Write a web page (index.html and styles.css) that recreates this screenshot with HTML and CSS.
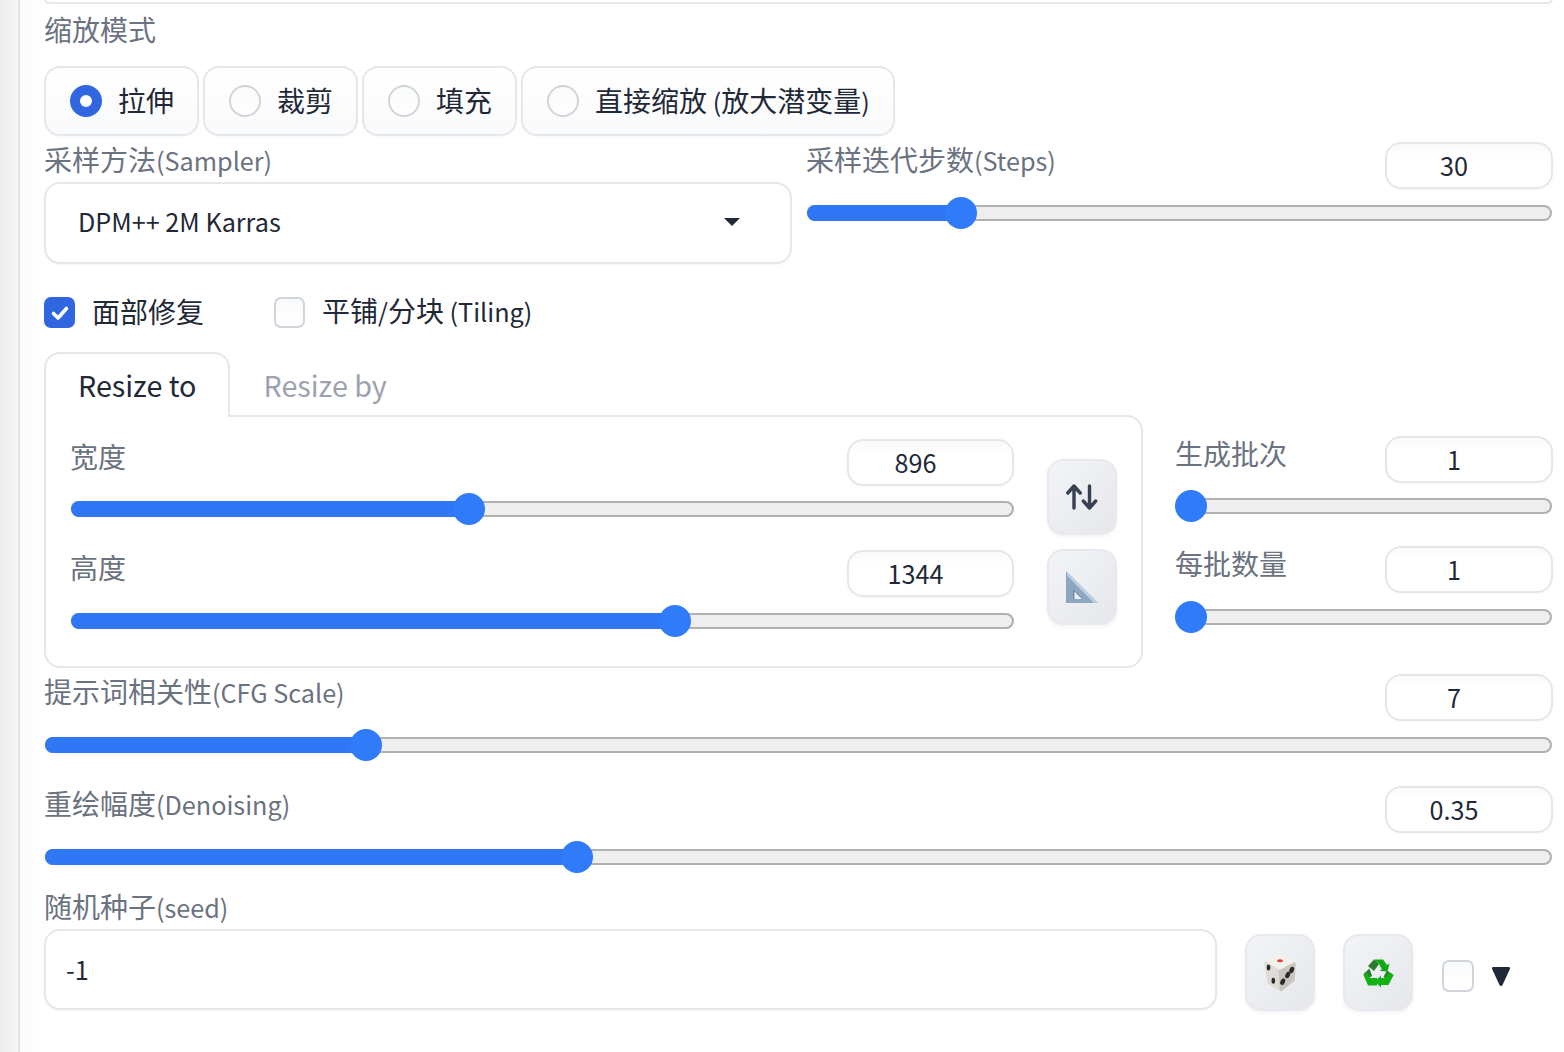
FILE: index.html
```html
<!DOCTYPE html>
<html lang="zh-CN">
<head>
<meta charset="utf-8">
<title>Settings</title>
<link rel="stylesheet" href="styles.css">
</head>
<body>
<div class="page">
  <div class="rail"></div>
  <main class="main">
    <div class="top-edge"></div>

    <section class="mode">
      <div class="label">缩放模式</div>
      <div class="radios">
        <label class="radio-item"><span class="radio checked"></span><span class="opt">拉伸</span></label>
        <label class="radio-item"><span class="radio"></span><span class="opt">裁剪</span></label>
        <label class="radio-item"><span class="radio"></span><span class="opt">填充</span></label>
        <label class="radio-item"><span class="radio"></span><span class="opt">直接缩放<span class="lat"> (</span>放大潜变量<span class="lat">)</span></span></label>
      </div>
    </section>

    <section class="sampler-row">
      <div class="sampler">
        <div class="label">采样方法<span class="lat">(Sampler)</span></div>
        <div class="select">
          <span class="lat">DPM++ 2M Karras</span>
          <svg class="caret" width="16" height="8" viewBox="0 0 16 8"><path d="M0 0h16L8 8z" fill="#1f2937"/></svg>
        </div>
      </div>
      <div class="grow">
        <div class="head"><span class="label">采样迭代步数<span class="lat">(Steps)</span></span><span class="num">30</span></div>
        <div class="slider"><div class="fill" style="width:20.78%"><i class="thumb"></i></div></div>
      </div>
    </section>

    <section class="checks">
      <label class="check-item"><span class="check on"><svg width="20" height="16" viewBox="0 0 20 16"><path d="M3.5 8.5l4.5 4.5 8.5-9.5" fill="none" stroke="#fff" stroke-width="3.6" stroke-linecap="round" stroke-linejoin="round"/></svg></span><span class="opt">面部修复</span></label>
      <label class="check-item"><span class="check"></span><span class="opt">平铺<span class="lat">/</span>分块<span class="lat"> (Tiling)</span></span></label>
    </section>

    <section class="size-row">
      <div class="size-left">
        <div class="tabs">
          <div class="tab active">Resize to</div>
          <div class="tab">Resize by</div>
        </div>
        <div class="panel">
          <div class="panel-sliders">
            <div class="block">
              <div class="head"><span class="label">宽度</span><span class="num">896</span></div>
              <div class="slider"><div class="fill" style="width:42.39%"><i class="thumb"></i></div></div>
            </div>
            <div class="block">
              <div class="head"><span class="label">高度</span><span class="num">1344</span></div>
              <div class="slider low"><div class="fill" style="width:64.35%"><i class="thumb"></i></div></div>
            </div>
          </div>
          <div class="panel-tools">
            <button class="tool" type="button" aria-label="swap">
              <svg width="32" height="32" viewBox="0 0 32 32"><path d="M8 27V5.5M1.8 12L8 5l6.200 7M23.5 5v21.5M17.3 20l6.200 7 6.200-7" fill="none" stroke="#374151" stroke-width="3.4" stroke-linecap="round" stroke-linejoin="round"/></svg>
            </button>
            <button class="tool" type="button" aria-label="ratio">
              <svg width="32" height="32" viewBox="0 0 32 32"><path d="M0 0L32 32H0z" fill="#8fa6c0"/><path d="M0 0L32 32H28L1.500 5z" fill="#bcd0e4"/><path d="M7 17.500L18 28H7z" fill="#eef0f4"/><path d="M7 17.500L18 28H16L8.500 20.500V28H7z" fill="#6f89a8"/></svg>
            </button>
          </div>
        </div>
      </div>
      <div class="size-right">
        <div class="block">
          <div class="head"><span class="label">生成批次</span><span class="num">1</span></div>
          <div class="slider"><div class="fill" style="width:4.03%"><i class="thumb"></i></div></div>
        </div>
        <div class="block">
          <div class="head"><span class="label">每批数量</span><span class="num">1</span></div>
          <div class="slider"><div class="fill" style="width:4.03%"><i class="thumb"></i></div></div>
        </div>
      </div>
    </section>

    <section class="wide cfg">
      <div class="head"><span class="label">提示词相关性<span class="lat">(CFG Scale)</span></span><span class="num">7</span></div>
      <div class="slider"><div class="fill" style="width:21.36%"><i class="thumb"></i></div></div>
    </section>

    <section class="wide denoise">
      <div class="head"><span class="label">重绘幅度<span class="lat">(Denoising)</span></span><span class="num">0.35</span></div>
      <div class="slider"><div class="fill" style="width:35.4%"><i class="thumb"></i></div></div>
    </section>

    <section class="seed-row">
      <div class="seed">
        <div class="label">随机种子<span class="lat">(seed)</span></div>
        <div class="seed-input"><span class="lat">-1</span></div>
      </div>
      <button class="tool seed-tool" type="button" aria-label="random">
        <svg width="33" height="38" viewBox="8 4 33 38">
          <path d="M24 5.500L38.500 13.500 24 21 9.500 13z" fill="#f3f1ed" stroke="#f3f1ed" stroke-width="2.500" stroke-linejoin="round"/>
          <path d="M9.500 13L24 21 25 40 12.700 33z" fill="#dedbd6" stroke="#dedbd6" stroke-width="2.500" stroke-linejoin="round"/>
          <path d="M38.500 13.500L24 21 25 40 37.500 30z" fill="#c8c5bf" stroke="#c8c5bf" stroke-width="2.500" stroke-linejoin="round"/>
          <ellipse cx="24" cy="10.700" rx="2.900" ry="1.500" fill="#e8383d"/>
          <ellipse cx="12.500" cy="17.500" rx="1.800" ry="3" fill="#2a2a2a"/>
          <ellipse cx="17.300" cy="30.700" rx="1.800" ry="3" fill="#2a2a2a"/>
          <ellipse cx="26.700" cy="31.700" rx="2.200" ry="3.400" transform="rotate(25 26.700 31.700)" fill="#2a2a2a"/>
          <ellipse cx="31.700" cy="25" rx="2.200" ry="3.400" transform="rotate(25 31.700 25)" fill="#2a2a2a"/>
          <ellipse cx="35.700" cy="20" rx="2.200" ry="3.400" transform="rotate(25 35.700 20)" fill="#2a2a2a"/>
        </svg>
      </button>
      <button class="tool seed-tool second" type="button" aria-label="reuse">
        <svg width="31" height="30" viewBox="9 6 31 30">
          <path d="M14 14L20 7.500 25 12 20 19z" fill="#2b7a31"/>
          <path d="M20 7.500H29L33 13 35.500 11.500 33.500 19.500 25.500 19 27.800 17.500 25 12z" fill="#12a912"/>
          <path d="M15.500 16.500L9.500 22 12 27.500 18 24z" fill="#2b7a31"/>
          <path d="M9.500 23L14 33.500H23V26H16L13 20.500z" fill="#12b012"/>
          <path d="M33 18.500L39.500 23 36 28.500 29.500 25z" fill="#2b7a31"/>
          <path d="M39.500 23L34.500 33H27V35.500L21 29.500 27 23.500V26H31L35 20z" fill="#10b310"/>
        </svg>
      </button>
      <span class="check seed-check"></span>
      <svg class="seed-arrow" width="18" height="19" viewBox="0 0 18 19"><path d="M1.500 0h15c1.200 0 1.800 1 1.400 2L10.500 18c-.6 1.200-2.400 1.200-3 0L.1 2C-.3 1 .3 0 1.500 0z" fill="#1f2937"/></svg>
    </section>
  </main>
</div>
</body>
</html>
```

FILE: styles.css
```css
* { box-sizing: border-box; }
html, body { margin: 0; height: 1052px; overflow: hidden; background: #fff; }
body {
  font-family: "Noto Sans CJK SC", "Noto Sans", sans-serif;
  font-size: 28px;
  color: #1f2937;
}
.page { display: flex; height: 1052px; }
.rail {
  width: 20px;
  flex: none;
  background: linear-gradient(90deg, #ececec, #f6f6f6);
  border-right: 2px solid #e2e2e8;
}
.main {
  flex: 1;
  min-width: 0;
  padding: 0 11px 0 24px;
  background: linear-gradient(90deg, #fafafa, #fff 25px);
}
.lat { font-size: 25.2px; }
.top-edge {
  height: 5px;
  border-bottom: 2px solid #e5e7eb;
  border-left: 2px solid #e5e7eb;
  border-right: 2px solid #e5e7eb;
  border-radius: 0 0 16px 16px;
  border-top: 0;
  margin-top: -1px;
}
.label {
  display: block;
  color: #6b7280;
  line-height: 34px;
  padding-bottom: 2px;
  white-space: nowrap;
}
.mode { padding-top: 8px; }
.radios { display: flex; gap: 4px; margin-top: 18px; }
.radio-item {
  display: flex;
  align-items: center;
  gap: 16px;
  height: 70px;
  padding: 0 23px 0 24px;
  border: 2px solid #e5e7eb;
  border-radius: 16px;
  background: linear-gradient(180deg, #fff, #f9fafb);
  box-shadow: 0 1px 2px rgba(0,0,0,.03);
  white-space: nowrap;
}
.opt { line-height: 1; margin-bottom: 2px; }
.radio {
  width: 32px;
  height: 32px;
  flex: none;
  border-radius: 50%;
  border: 2px solid #d1d5db;
  background: linear-gradient(180deg, #f9fafb, #fff);
}
.radio.checked { border: 10px solid #3066e0; background: #fff; }

.sampler-row { display: flex; gap: 14px; margin-top: 6px; }
.sampler { width: 748px; flex: none; }
.grow { flex: 1; min-width: 0; }
.select {
  display: flex;
  align-items: center;
  justify-content: space-between;
  height: 82px;
  margin-top: 3px;
  padding: 0 50px 2px 32px;
  border: 2px solid #e5e7eb;
  border-radius: 16px;
  background: #fff;
  box-shadow: 0 1px 2px rgba(0,0,0,.04);
  line-height: 1;
}
.caret { display: block; }
.head { display: flex; justify-content: space-between; align-items: flex-start; }
.num {
  display: flex;
  align-items: center;
  justify-content: center;
  width: 168px;
  height: 47px;
  flex: none;
  padding-right: 30px;
  border: 2px solid #e5e7eb;
  border-radius: 16px;
  background: linear-gradient(180deg, #fafafa, #fff 30%);
  box-shadow: 0 1px 2px rgba(0,0,0,.03);
  font-size: 25.2px;
  line-height: 1;
}
.slider {
  height: 16px;
  margin: 16px 1px 0 1px;
  border: 2px solid #b0b0b0;
  border-radius: 8px;
  background: #eee;
}
.fill {
  position: relative;
  height: 16px;
  margin: -2px 0 0 -2px;
  background: #3077f6;
  border-radius: 8px 0 0 8px;
}
.thumb {
  position: absolute;
  top: -8px;
  right: -16px;
  width: 32px;
  height: 32px;
  border-radius: 50%;
  background: #2f7bfa;
}

.checks { display: flex; gap: 70px; margin-top: 33px; height: 31px; }
.check-item { display: flex; align-items: center; gap: 17px; white-space: nowrap; }
.check {
  display: flex;
  align-items: center;
  justify-content: center;
  width: 31px;
  height: 31px;
  flex: none;
  border: 2px solid #d1d5db;
  border-radius: 7px;
  background: linear-gradient(180deg, #f9fafb, #fff);
}
.check.on { border: 0; background: #3066e0; }
.check-item .opt { margin-bottom: 4px; }

.size-row { display: flex; gap: 32px; margin-top: 24px; }
.size-left { width: 1099px; flex: none; }
.size-right { flex: 1; min-width: 0; padding-top: 84px; }
.size-right .block:first-child { height: 110px; }
.size-right .block:first-child .slider { margin-top: 15px; }
.block { height: 111px; }
.tabs { display: flex; margin-bottom: -2px; }
.tab {
  position: relative;
  z-index: 1;
  height: 65px;
  padding: 0 32px 1px;
  display: flex;
  align-items: center;
  color: #9ca3af;
  font-size: 28.7px;
  line-height: 1;
  border: 2px solid transparent;
  border-bottom: 0;
}
.tab.active {
  padding: 0 31px 1px 32px;
  color: #1f2937;
  background: #fff;
  border-color: #e5e7eb;
  border-radius: 16px 16px 0 0;
}
.panel {
  display: flex;
  height: 253px;
  padding: 22px 24px 0;
  border: 2px solid #e5e7eb;
  border-radius: 0 16px 16px 16px;
}
.panel-sliders { width: 944px; flex: none; }
.panel .num { width: 167px; }
.panel .slider { margin: 15px 0 0 1px; }
.panel .slider.low { margin-top: 16px; }
.panel-tools { display: flex; flex-direction: column; gap: 14px; margin: 20px 0 0 33px; }
.tool {
  display: flex;
  align-items: center;
  justify-content: center;
  width: 70px;
  height: 76px;
  padding: 0;
  border: 2px solid #e8e9ee;
  border-radius: 16px;
  background: linear-gradient(135deg, #f3f4f6, #e6e7ec);
  box-shadow: 0 2px 4px rgba(0,0,0,.05);
}

.wide { height: 112px; }
.cfg { margin-top: 6px; }
.denoise { height: 103px; }
.seed-row { display: flex; align-items: flex-start; }
.seed { width: 1173px; flex: none; }
.seed-input {
  display: flex;
  align-items: center;
  height: 81px;
  margin-top: 3px;
  padding-left: 20px;
  border: 2px solid #e5e7eb;
  border-radius: 16px;
  background: #fff;
  box-shadow: 0 1px 2px rgba(0,0,0,.04);
  line-height: 1;
}
.seed-tool { height: 77px; margin: 45px 0 0 28px; }
.seed-check { width: 32px; height: 32px; margin: 71px 0 0 29px; }
.seed-arrow { display: block; margin: 78px 0 0 18px; }
```
